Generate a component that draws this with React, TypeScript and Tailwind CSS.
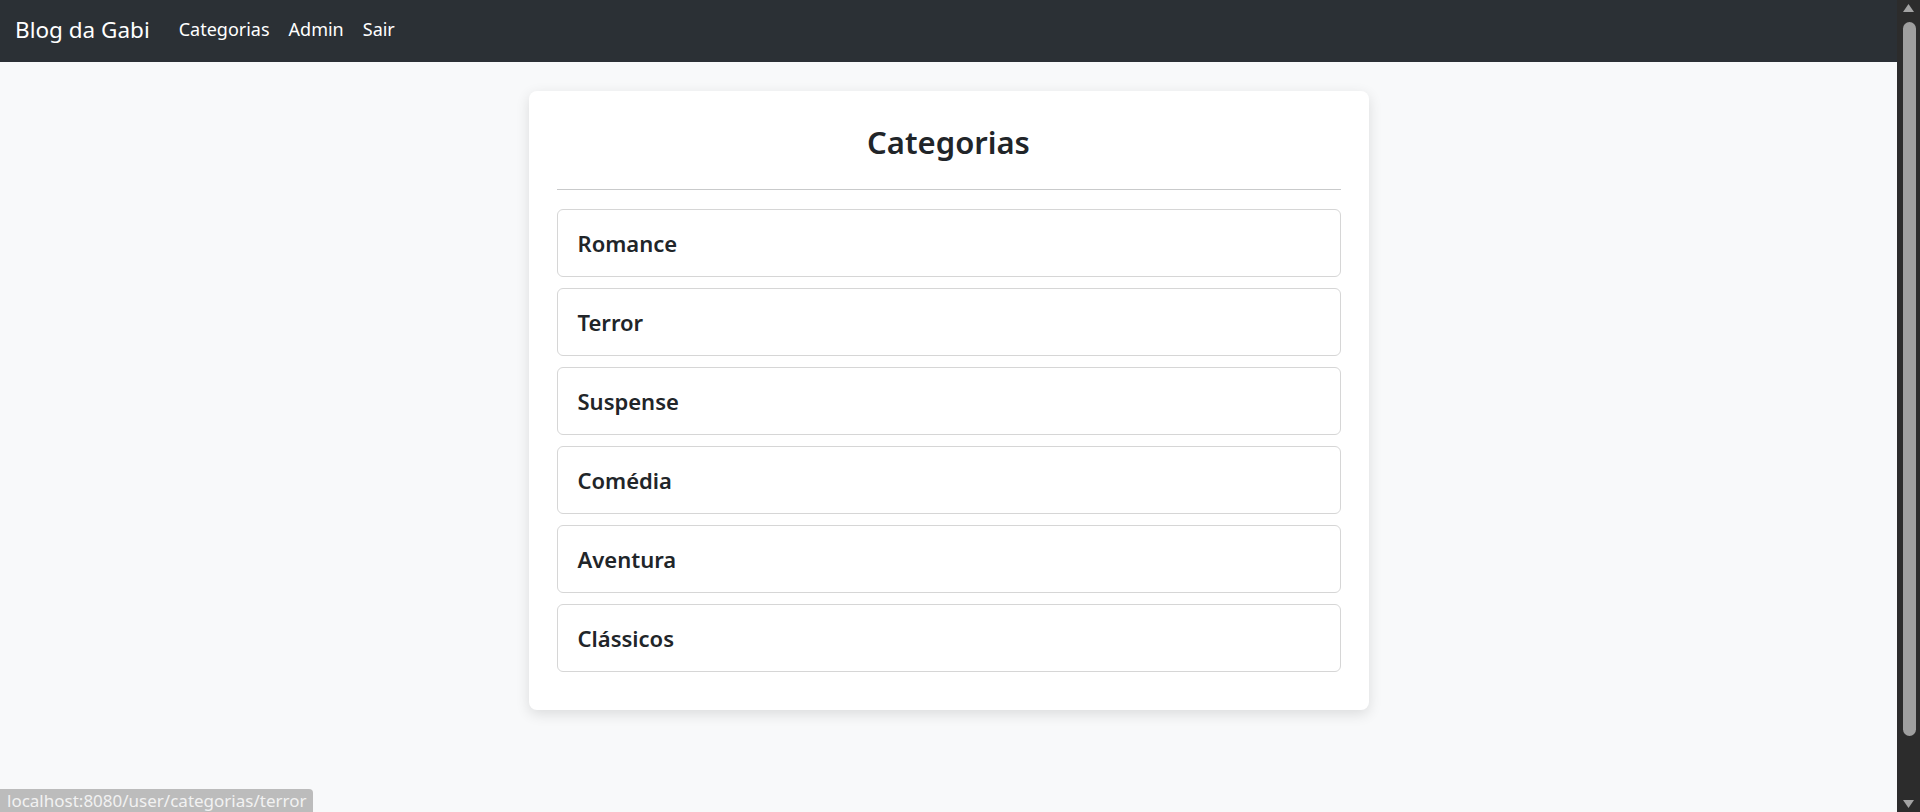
import React from 'react';

const categorias = ['Romance', 'Terror', 'Suspense', 'Comédia', 'Aventura', 'Clássicos'];

const font = { fontFamily: '"Noto Sans", "Open Sans", sans-serif' };

function Navbar() {
  return (
    <nav className="h-[62px] bg-[#2b3035] flex items-center px-[15px] shrink-0">
      <a href="#" className="text-[22.5px] text-white leading-none mr-[29px] pb-[2px]">
        Blog da Gabi
      </a>
      <div className="flex items-center gap-[19px] text-[18px] text-white leading-none pb-[4px]">
        <a href="#">Categorias</a>
        <a href="#">Admin</a>
        <a href="#">Sair</a>
      </div>
    </nav>
  );
}

function CategoryItem({ name }: { name: string }) {
  return (
    <a
      href="#"
      className="h-[68px] flex items-center px-5 border border-[#d6d6d6] rounded-[6px] bg-white text-[22px] font-semibold text-[#212529]"
    >
      {name}
    </a>
  );
}

// Fake browser scrollbar on the right
function Scrollbar() {
  return (
    <div className="w-[23px] shrink-0 bg-[#2c2c2c] flex flex-col items-center">
      <svg className="mt-[3px]" width="13" height="10" viewBox="0 0 13 10">
        <path d="M6.5 1 L12 9 L1 9 Z" fill="#a3a3a3" />
      </svg>
      <div className="w-[13px] h-[714px] mt-[9px] ml-[2px] rounded-full bg-[#9f9f9f]" />
      <div className="flex-1" />
      <svg className="mb-[3px]" width="13" height="10" viewBox="0 0 13 10">
        <path d="M1 1 L12 1 L6.5 9 Z" fill="#a3a3a3" />
      </svg>
    </div>
  );
}

export default function App() {
  return (
    <div className="relative h-[812px] w-full flex overflow-hidden" style={font}>
      <div className="flex-1 flex flex-col bg-[#f8f9fa] min-w-0">
        <Navbar />
        <main className="flex justify-center pt-[29px]">
          <div className="w-[840px] bg-white rounded-[8px] shadow-[0_4px_14px_rgba(0,0,0,0.12)] px-[28px] pt-[33px] pb-[38px]">
            <h2 className="text-center text-[31px] font-semibold text-[#212529] leading-[1.2]">
              Categorias
            </h2>
            <hr className="mt-[28px] border-t border-[#c9cacb]" />
            <div className="mt-[19px] flex flex-col gap-[11px]">
              {categorias.map((c) => (
                <CategoryItem key={c} name={c} />
              ))}
            </div>
          </div>
        </main>
      </div>
      <Scrollbar />

      {/* browser status bubble */}
      <div className="absolute left-0 bottom-0 h-[23px] w-[313px] bg-[#bcbcbc] rounded-tr-[4px] flex items-center pl-[7px] text-[17px] text-[#f2f2f2] leading-none overflow-hidden">
        localhost:8080/user/categorias/terror
      </div>
    </div>
  );
}
